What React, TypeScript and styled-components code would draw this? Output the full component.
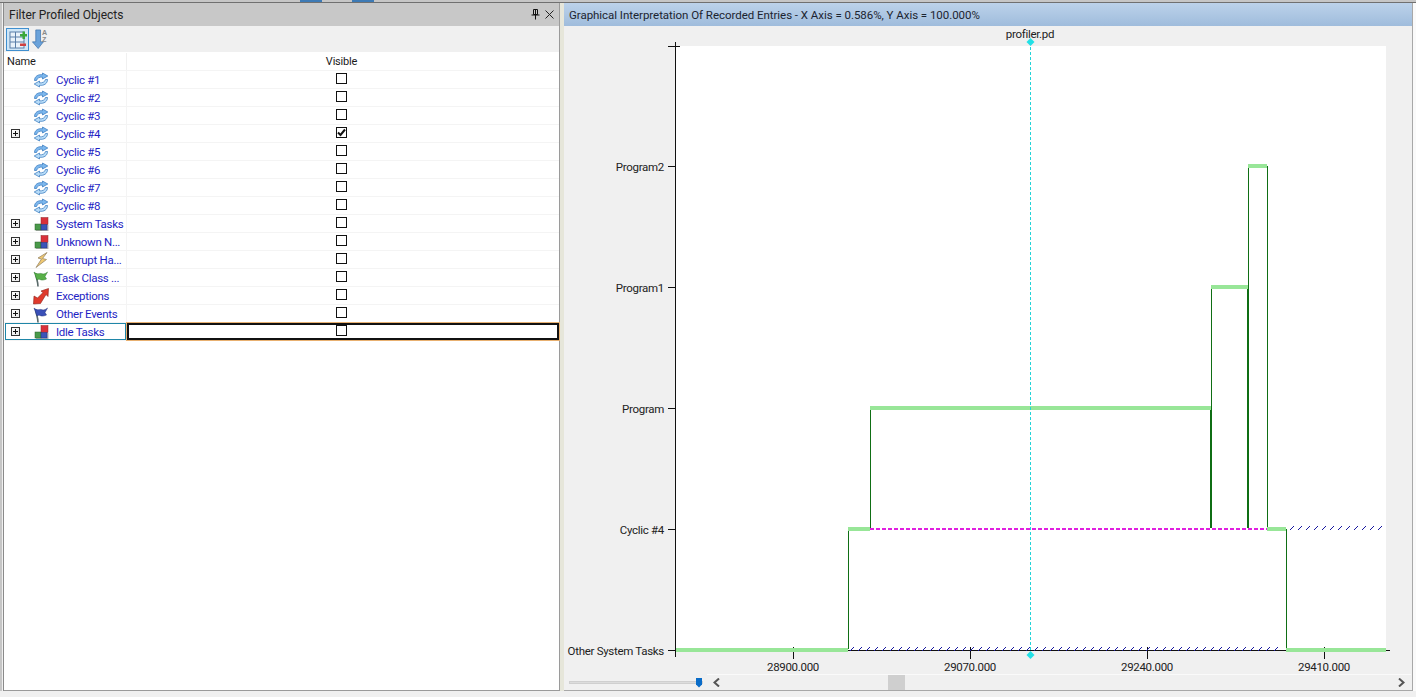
import React from 'react'
import styled, { createGlobalStyle } from 'styled-components'

const GlobalStyle = createGlobalStyle`
  html, body {
    margin: 0;
    padding: 0;
    height: 100%;
    overflow: hidden;
    background: #f0f0f0;
    font-family: Roboto, "Liberation Sans", Arial, sans-serif;
    font-size: 11.5px;
    color: #1a1a1a;
  }
`

const Window = styled.div`
  width: 1416px;
  height: 697px;
  display: flex;
  flex-direction: column;
  background: #f0f0f0;
`
const TopStrip = styled.div`
  height: 3px;
  flex: none;
  background: #c6c6c6;
  border-bottom: 1px solid #707070;
  box-sizing: border-box;
  display: flex;
  gap: 30px;
  padding-left: 300px;
`
const TopTab = styled.div`
  width: 22px;
  height: 2px;
  background: #3d7ab5;
`
const Panels = styled.div`
  height: 688px;
  flex: none;
  display: flex;
  padding-left: 3px;
  padding-right: 3px;
  background: #f0f0f0;
  box-shadow: inset 2px 0 0 #c6c6c6, inset -3px 0 0 #fafafa;
`
const LeftPanel = styled.section`
  width: 557px;
  flex: none;
  display: flex;
  flex-direction: column;
  border-right: 1px solid #9a9a9a;
  border-left: 1px solid #8a8a8a;
  box-sizing: border-box;
`
const Splitter = styled.div`
  width: 4px;
  flex: none;
  background: #e6e6da;
`
const RightPanel = styled.section`
  flex: 1;
  min-width: 0;
  display: flex;
  flex-direction: column;
  border-right: 1px solid #a8a8a8;
  border-bottom: 1px solid #a8a8a8;
`
const TitleBar = styled.header<{ $active?: boolean }>`
  height: 23px;
  flex: none;
  display: flex;
  align-items: center;
  justify-content: space-between;
  padding: 0 5px;
  box-sizing: border-box;
  font-size: ${p => (p.$active ? '11.5px' : '12px')};
  letter-spacing: ${p => (p.$active ? '-0.04px' : '0')};
  background: ${p => (p.$active ? 'linear-gradient(#bcd2ea, #9fbcdc)' : '#c8c8c8')};
  color: ${p => (p.$active ? '#1c2430' : '#222')};
`
const TitleIcons = styled.div`
  display: flex;
  align-items: center;
  gap: 5px;
  color: #222;
`
const Toolbar = styled.div`
  height: 26px;
  flex: none;
  display: flex;
  align-items: center;
  gap: 1px;
  padding-left: 2px;
  background: #f0f0f0;
`
const ToolButton = styled.button<{ $on?: boolean }>`
  width: 23px;
  height: 23px;
  padding: 0;
  display: flex;
  align-items: center;
  justify-content: center;
  background: ${p => (p.$on ? '#cfe6f7' : 'transparent')};
  border: 1px solid ${p => (p.$on ? '#3f8fcf' : 'transparent')};
`
const Table = styled.div`
  flex: 1;
  min-height: 0;
  background: #fff;
  border-bottom: 1px solid #9a9a9a;
`
const HeadRow = styled.div`
  height: 19px;
  display: grid;
  grid-template-columns: 123px 1fr;
  align-items: center;
  border-bottom: 1px solid #f4f4f4;
  box-sizing: border-box;
  padding-top: 1px;
  font-size: 11px;
  letter-spacing: -0.2px;
`
const HeadName = styled.div`
  padding-left: 3px;
  line-height: 17px;
  border-right: 1px solid #f0f0f0;
`
const HeadVisible = styled.div`
  text-align: center;
  padding-right: 3px;
`
const Row = styled.div`
  height: 18px;
  display: grid;
  grid-template-columns: 123px 1fr;
  box-sizing: border-box;
  border-bottom: 1px solid #f4f4f4;
`
const NameCell = styled.div<{ $selected?: boolean }>`
  display: flex;
  align-items: center;
  padding-left: 6px;
  margin-left: 1px;
  box-shadow: ${p => (p.$selected ? 'inset 0 0 0 1px #1f86a8' : 'none')};
  border-right: 1px solid #f4f4f4;
`
const Expander = styled.span`
  width: 9px;
  height: 9px;
  flex: none;
  box-sizing: border-box;
  border: 1px solid #333;
  background: linear-gradient(135deg, #fff, #e6e6e6);
  position: relative;
  &::before {
    content: '';
    position: absolute;
    left: 1px;
    right: 1px;
    top: 3px;
    height: 1px;
    background: #111;
  }
  &::after {
    content: '';
    position: absolute;
    top: 1px;
    bottom: 1px;
    left: 3px;
    width: 1px;
    background: #111;
  }
`
const ExpanderGap = styled.span`
  width: 9px;
  flex: none;
`
const IconSlot = styled.span`
  width: 16px;
  height: 16px;
  flex: none;
  margin-left: 13px;
`
const RowLabel = styled.span`
  margin-left: 7px;
  color: #1f1fc4;
  white-space: nowrap;
  letter-spacing: -0.3px;
`
const VisibleCell = styled.div<{ $selected?: boolean }>`
  display: flex;
  align-items: center;
  justify-content: center;
  padding-right: 3px;
  padding-bottom: 2px;
  box-shadow: ${p => (p.$selected ? 'inset 0 0 0 2px #111, 0 0 0 1px #e8b070' : 'none')};
`
const CheckBox = styled.span`
  width: 11px;
  height: 11px;
  box-sizing: border-box;
  border: 1px solid #111;
  background: #fff;
  display: flex;
  align-items: center;
  justify-content: center;
`
const ChartArea = styled.div`
  height: 648px;
  flex: none;
`
const AxisLabel = styled.text`
  font-size: 11.5px;
  letter-spacing: -0.3px;
  fill: #222;
`
const ScrollRow = styled.div`
  height: 16px;
  flex: none;
  display: flex;
  align-items: center;
`
const ZoomSlider = styled.div`
  width: 134px;
  margin-left: 5px;
  height: 3px;
  flex: none;
  background: #dcdcdc;
  border: 1px solid #cfcfcf;
  box-sizing: border-box;
  position: relative;
`
const ZoomThumb = styled.span`
  position: absolute;
  right: 0;
  top: -4px;
  width: 6px;
  height: 10px;
  background: #0a6cc8;
  clip-path: polygon(0 0, 100% 0, 100% 70%, 50% 100%, 0 70%);
`
const ScrollBar = styled.div`
  flex: 1;
  margin-left: 4px;
  margin-right: 1px;
  height: 16px;
  display: flex;
  align-items: center;
  justify-content: space-between;
  padding: 0 6px;
  border-top: 1px solid #fafafa;
  box-sizing: border-box;
  position: relative;
`
const ScrollThumb = styled.span`
  position: absolute;
  left: 181px;
  top: 0;
  width: 17px;
  height: 15px;
  background: #cfcfcf;
`

const CyclicIcon = () => (
  <svg width="16" height="16" viewBox="0 0 16 16" fill="none">
    <path d="M1.500 8.500C1.500 4.500 5 2 9.500 2.800V1L14.800 4 9.500 7V5.200C7 4.800 4 6 3.500 8.500z" fill="#7db8ee" stroke="#2f74bc" strokeWidth=".7" />
    <path d="M14.500 7.500C14.500 11.500 11 14 6.500 13.200V15L1.200 12 6.500 9V10.800C9 11.200 12 10 12.500 7.500z" fill="#b8dcf8" stroke="#2f74bc" strokeWidth=".7" />
  </svg>
)
const BlocksIcon = () => (
  <svg width="16" height="16" viewBox="0 0 16 16">
    <rect x="3" y="9" width="12.500" height="6" fill="#b4b4b4" />
    <rect x="8" y="1.500" width="7" height="7" fill="#d8303a" stroke="#902828" strokeWidth=".5" />
    <rect x="2" y="8" width="6" height="6" fill="#4a9a4a" stroke="#2a602a" strokeWidth=".5" />
    <rect x="8" y="8.500" width="6" height="5.500" fill="#3a54b8" stroke="#223080" strokeWidth=".5" />
  </svg>
)
const BoltIcon = () => (
  <svg width="16" height="16" viewBox="0 0 16 16">
    <path d="M14 .5 5 6l3.500 1L3 15.500 13.500 7.500 9.500 6.500z" fill="#f0c870" stroke="#9a8a6a" strokeWidth=".8" />
  </svg>
)
const FlagIcon = ({ color, edge }: { color: string; edge: string }) => (
  <svg width="16" height="17" viewBox="0 0 16 17">
    <path d="M2.500 3C3 8 5 11 5 16.500" stroke="#5a6a6a" strokeWidth="1.600" fill="none" />
    <path d="M1 2c3 3 5 1 7 1.500 2 .6 3.500 1 6.500-1.500L12 6.500l1.500 2.500c-2.500 1-4.500 1.500-6.500.5-1.200-.6-2-.2-3 .5z" fill={color} stroke={edge} strokeWidth=".5" />
  </svg>
)
const ExceptionIcon = () => (
  <svg width="16" height="17" viewBox="0 0 16 17">
    <path d="M.5 16 1 8l3.500 2L10 4.500 8 3 15.500.5 15 8.500 13 6.500 7.500 15.500z" fill="#e03a2c" stroke="#8a2018" strokeWidth=".6" />
  </svg>
)
const ExpandIcon = () => (
  <svg width="19" height="19" viewBox="0 0 19 19">
    <rect x="2" y="2" width="14" height="16" fill="#e8f2fa" stroke="#5a7fa8" />
    <path d="M2 7h14M2 12h14M7.500 2v16" stroke="#5a7fa8" fill="none" />
    <path d="M12 4h2.500V1.500h2.500V4h2v2.500h-2V9h-2.500V6.500H12z" fill="#3aa83a" />
    <rect x="12" y="13.500" width="6" height="2.500" fill="#d04040" />
  </svg>
)
const SortIcon = () => (
  <svg width="22" height="22" viewBox="0 0 22 22">
    <path d="M5 1.500h5V14h3l-5.500 7L1.500 14H5z" fill="#6aa2da" stroke="#386ea8" strokeWidth=".7" />
    <text x="11.500" y="7" fontSize="7.500" fontWeight="700" fill="#8a8a8a">A</text>
    <text x="11.500" y="14" fontSize="7.500" fontWeight="700" fill="#8a8a8a">Z</text>
  </svg>
)
const PinIcon = () => (
  <svg width="9" height="11" viewBox="0 0 9 11">
    <path d="M2.500.5h4v5h-4zM4.500 1v5M.5 6h8M4.500 6v4.500" fill="none" stroke="#111" />
  </svg>
)
const CloseIcon = () => (
  <svg width="9" height="9" viewBox="0 0 9 9">
    <path d="M.5.500l8 8M8.500.500l-8 8" stroke="#222" fill="none" />
  </svg>
)
const Tick = () => (
  <svg width="9" height="9" viewBox="0 0 9 9">
    <path d="M1 4.500 3.500 7 8 1.500" stroke="#111" strokeWidth="2" fill="none" />
  </svg>
)
const Chevron = ({ right }: { right?: boolean }) => (
  <svg width="7" height="9" viewBox="0 0 7 9">
    <path d={right ? 'M1 .5 5.500 4.500 1 8.500' : 'M6 .5 1.500 4.500 6 8.500'} stroke="#555" strokeWidth="2" fill="none" />
  </svg>
)

type Item = { label: string; icon: React.ReactNode; expand?: boolean; checked?: boolean; selected?: boolean }

const items: Item[] = [
  { label: 'Cyclic #1', icon: <CyclicIcon /> },
  { label: 'Cyclic #2', icon: <CyclicIcon /> },
  { label: 'Cyclic #3', icon: <CyclicIcon /> },
  { label: 'Cyclic #4', icon: <CyclicIcon />, expand: true, checked: true },
  { label: 'Cyclic #5', icon: <CyclicIcon /> },
  { label: 'Cyclic #6', icon: <CyclicIcon /> },
  { label: 'Cyclic #7', icon: <CyclicIcon /> },
  { label: 'Cyclic #8', icon: <CyclicIcon /> },
  { label: 'System Tasks', icon: <BlocksIcon />, expand: true },
  { label: 'Unknown N...', icon: <BlocksIcon />, expand: true },
  { label: 'Interrupt Ha...', icon: <BoltIcon />, expand: true },
  { label: 'Task Class ...', icon: <FlagIcon color="#58b048" edge="#2a7a2a" />, expand: true },
  { label: 'Exceptions', icon: <ExceptionIcon />, expand: true },
  { label: 'Other Events', icon: <FlagIcon color="#3a50b8" edge="#20307a" />, expand: true },
  { label: 'Idle Tasks', icon: <BlocksIcon />, expand: true, selected: true },
]

const yTicks = [
  { y: 167, label: 'Program2' },
  { y: 288, label: 'Program1' },
  { y: 409, label: 'Program' },
  { y: 530, label: 'Cyclic #4' },
  { y: 651, label: 'Other System Tasks' },
]
const xTicks = [
  { x: 793, label: '28900.000' },
  { x: 970, label: '29070.000' },
  { x: 1147, label: '29240.000' },
  { x: 1324, label: '29410.000' },
]
// x1, x2, y of the light bars
const bars = [
  [676, 848, 650],
  [848, 870, 529],
  [870, 1211, 408],
  [1211, 1248, 287],
  [1248, 1267, 166],
  [1267, 1286, 529],
  [1286, 1386, 650],
]
// x, y1, y2, width of the dark edges
const edges = [
  [848.5, 529, 649, 1],
  [870.5, 408, 528, 1],
  [1211.5, 288, 408, 1],
  [1211, 408, 528, 2],
  [1248.5, 166, 287, 1],
  [1248, 287, 528, 2],
  [1267.5, 166, 528, 1],
  [1286.5, 529, 649, 1],
]

const hatch = (from: number, to: number, y: number) => {
  const parts: string[] = []
  for (let x = from; x + 4 <= to; x += 8) parts.push(`M${x} ${y + 3}l4 -4`)
  return parts.join('')
}

const Chart = () => (
  <svg width="848" height="648" viewBox="564 26 848 648" style={{ display: 'block' }}>
    <rect x="676" y="46" width="710" height="604" fill="#fff" />
    <AxisLabel x="1030" y="38" textAnchor="middle">profiler.pd</AxisLabel>

    <path d="M675.500 42V657M668 46.500H680M676 650.500H1390" stroke="#111" fill="none" />
    {yTicks.map(t => (
      <g key={t.y}>
        <path d={`M668 ${t.y - 0.5}H675`} stroke="#111" />
        <AxisLabel x="664" y={t.y + 4} textAnchor="end">{t.label}</AxisLabel>
      </g>
    ))}
    {xTicks.map(t => (
      <g key={t.x}>
        <path d={`M${t.x + 0.5} 647V659`} stroke="#111" />
        <AxisLabel x={t.x} y="671" textAnchor="middle">{t.label}</AxisLabel>
      </g>
    ))}

    <path d={hatch(850, 1284, 648)} stroke="#1818a0" fill="none" />
    <path d={hatch(1290, 1385, 527)} stroke="#1818a0" fill="none" />
    <path d="M870 529H1267" stroke="#e020e0" strokeWidth="2" strokeDasharray="4 2" fill="none" />

    {edges.map(([x, y1, y2, w]) => (
      <path key={`${x}-${y1}`} d={`M${x} ${y1}V${y2}`} stroke="#0f6e14" strokeWidth={w} fill="none" />
    ))}
    {bars.map(([x1, x2, y]) => (
      <path key={`${x1}-${y}`} d={`M${x1} ${y}H${x2}`} stroke="#98e698" strokeWidth="4" fill="none" />
    ))}

    <path d="M1030.500 42V655" stroke="#22d3d8" strokeDasharray="3 2" fill="none" />
    <path d="M1030.500 38l4 4-4 4-4-4zM1030.500 651l4 4-4 4-4-4z" fill="#22e0e6" />
  </svg>
)

export default function App() {
  return (
    <Window>
      <GlobalStyle />
      <TopStrip>
        <TopTab />
        <TopTab />
      </TopStrip>
      <Panels>
        <LeftPanel>
          <TitleBar>
            <span>Filter Profiled Objects</span>
            <TitleIcons>
              <PinIcon />
              <CloseIcon />
            </TitleIcons>
          </TitleBar>
          <Toolbar>
            <ToolButton $on><ExpandIcon /></ToolButton>
            <ToolButton><SortIcon /></ToolButton>
          </Toolbar>
          <Table>
            <HeadRow>
              <HeadName>Name</HeadName>
              <HeadVisible>Visible</HeadVisible>
            </HeadRow>
            {items.map(item => (
              <Row key={item.label}>
                <NameCell $selected={item.selected}>
                  {item.expand ? <Expander /> : <ExpanderGap />}
                  <IconSlot>{item.icon}</IconSlot>
                  <RowLabel>{item.label}</RowLabel>
                </NameCell>
                <VisibleCell $selected={item.selected}>
                  <CheckBox>{item.checked && <Tick />}</CheckBox>
                </VisibleCell>
              </Row>
            ))}
          </Table>
        </LeftPanel>
        <Splitter />
        <RightPanel>
          <TitleBar $active>
            <span>Graphical Interpretation Of Recorded Entries - X Axis = 0.586%, Y Axis = 100.000%</span>
          </TitleBar>
          <ChartArea>
            <Chart />
          </ChartArea>
          <ScrollRow>
            <ZoomSlider>
              <ZoomThumb />
            </ZoomSlider>
            <ScrollBar>
              <Chevron />
              <ScrollThumb />
              <Chevron right />
            </ScrollBar>
          </ScrollRow>
        </RightPanel>
      </Panels>
    </Window>
  )
}
